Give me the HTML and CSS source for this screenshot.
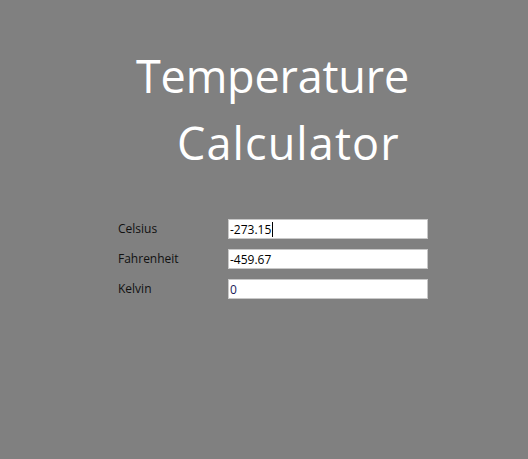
FILE: index.html
```html
<!DOCTYPE html>
<html>
<head>
<meta charset="utf-8">
<link rel="stylesheet" href="styles.css">
</head>
<body>
<div class="app">
  <h1 class="title">
    <span class="line line1">Temperature</span>
    <span class="line line2">Calculator</span>
  </h1>
  <div class="form">
    <label class="lbl">Celsius</label>
    <div class="field"><span class="val">-273.15</span><span class="caret"></span></div>
    <label class="lbl">Fahrenheit</label>
    <div class="field"><span class="val">-459.67</span></div>
    <label class="lbl">Kelvin</label>
    <div class="field"><span class="val blue">0</span></div>
  </div>
</div>
</body>
</html>
```
FILE: styles.css
```css
html, body {
  margin: 0;
  padding: 0;
  background: #808080;
  width: 528px;
  height: 459px;
  overflow: hidden;
}
.app {
  font-family: "Open Sans", "Noto Sans", sans-serif;
}
.title {
  margin: 0;
  padding-top: 42px;
  font-weight: 400;
  font-size: 45px;
  color: #ffffff;
  line-height: 67px;
}
.line {
  display: block;
}
.line1 { padding-left: 136px; letter-spacing: -0.2px; }
.line2 { padding-left: 177px; letter-spacing: 1.1px; }
.form {
  margin-top: 43px;
  margin-left: 118px;
  display: grid;
  grid-template-columns: 110px 200px;
  grid-auto-rows: 20px;
  row-gap: 10px;
  align-items: center;
}
.lbl {
  font-size: 12px;
  color: #111;
  align-self: start;
  line-height: 19px;
}
.field {
  height: 18px;
  border: 1px solid #c8c8c8;
  background: #fff;
  display: flex;
  align-items: center;
  font-size: 12px;
  color: #000;
  padding-left: 1px;
}
.val.blue { color: #1a1a5a; }
.caret {
  display: inline-block;
  width: 1px;
  height: 15px;
  background: #000;
  margin-left: 1px;
}
```
